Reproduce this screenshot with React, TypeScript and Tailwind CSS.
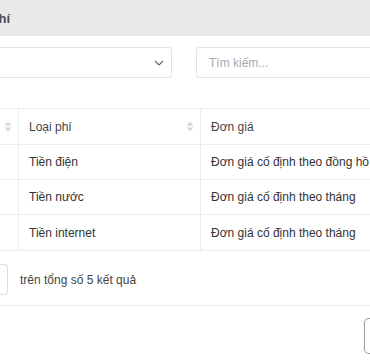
import React from "react";

const SortIcon = () => (
  <svg width="8" height="11" viewBox="0 0 8 11" className="shrink-0">
    <path d="M4 0.5 L7.5 4.5 H0.5 Z" fill="#d6d6dc" />
    <path d="M4 10.5 L7.5 6.5 H0.5 Z" fill="#d6d6dc" />
  </svg>
);

const rows: [string, string, string][] = [
  ["Tiền điện", "Đơn giá cố định theo đồng hồ", "h-[35px]"],
  ["Tiền nước", "Đơn giá cố định theo tháng", "h-[35px]"],
  ["Tiền internet", "Đơn giá cố định theo tháng", "h-[36px]"],
];

export default function App() {
  return (
    <div
      className="w-[370px] h-[360px] overflow-hidden bg-white text-[12px] text-[#333]"
      style={{ fontFamily: '"Liberation Sans", Arial, sans-serif' }}
    >
      <div className="h-[36px] bg-[#e9e9e9] flex items-center">
        <div className="w-[10px] flex justify-end whitespace-nowrap text-[13px] font-semibold text-[#4a4a55] pt-[1px]">
          Danh sách loại phí
        </div>
      </div>

      <div className="flex gap-[24px] mt-[11px]">
        <div className="w-[172px] h-[31px] border border-[#e2e2e8] rounded-[4px] border-l-0 rounded-l-none flex items-center justify-end pr-[7px]">
          <svg width="10" height="6" viewBox="0 0 10 6">
            <path d="M1 1 L5 5 L9 1" fill="none" stroke="#666" strokeWidth="1.2" />
          </svg>
        </div>
        <div className="flex-1 h-[31px] border border-[#e2e2e8] rounded-[4px] border-r-0 rounded-r-none flex items-center pl-[12px] text-[#a8a8b0]">
          Tìm kiếm...
        </div>
      </div>

      <div className="mt-[30px] border-t border-[#ebebf0]">
        <div className="flex h-[36px] border-b border-[#ebebf0] items-center">
          <div className="w-[19px] h-full flex items-center justify-end pr-[6px] border-r border-[#ebebf0]">
            <SortIcon />
          </div>
          <div className="w-[182px] h-full flex items-center justify-between pl-[10px] pr-[6px] border-r border-[#ebebf0] text-[#444]">
            <span>Loại phí</span>
            <SortIcon />
          </div>
          <div className="flex-1 pl-[10px] text-[#444]">Đơn giá</div>
        </div>
        {rows.map(([a, b, h]) => (
          <div key={a} className={`flex ${h} border-b border-[#ebebf0] items-center`}>
            <div className="w-[19px] h-full border-r border-[#ebebf0]" />
            <div className="w-[182px] h-full flex items-center pl-[10px] border-r border-[#ebebf0]">
              {a}
            </div>
            <div className="flex-1 pl-[10px] whitespace-nowrap">{b}</div>
          </div>
        ))}
      </div>

      <div className="flex items-center mt-[13px] h-[31px]">
        <div className="w-[8px] h-full border border-l-0 border-[#dcdce2] rounded-r-[4px]" />
        <span className="ml-[12px] text-[#444]">trên tổng số 5 kết quả</span>
      </div>

      <div className="mt-[10px] border-t border-[#ededf0]" />

      <div className="flex justify-end mt-[12px]">
        <div className="w-[6px] h-[36px] border border-r-0 border-[#9a9aa2] rounded-l-[5px]" />
      </div>
    </div>
  );
}
